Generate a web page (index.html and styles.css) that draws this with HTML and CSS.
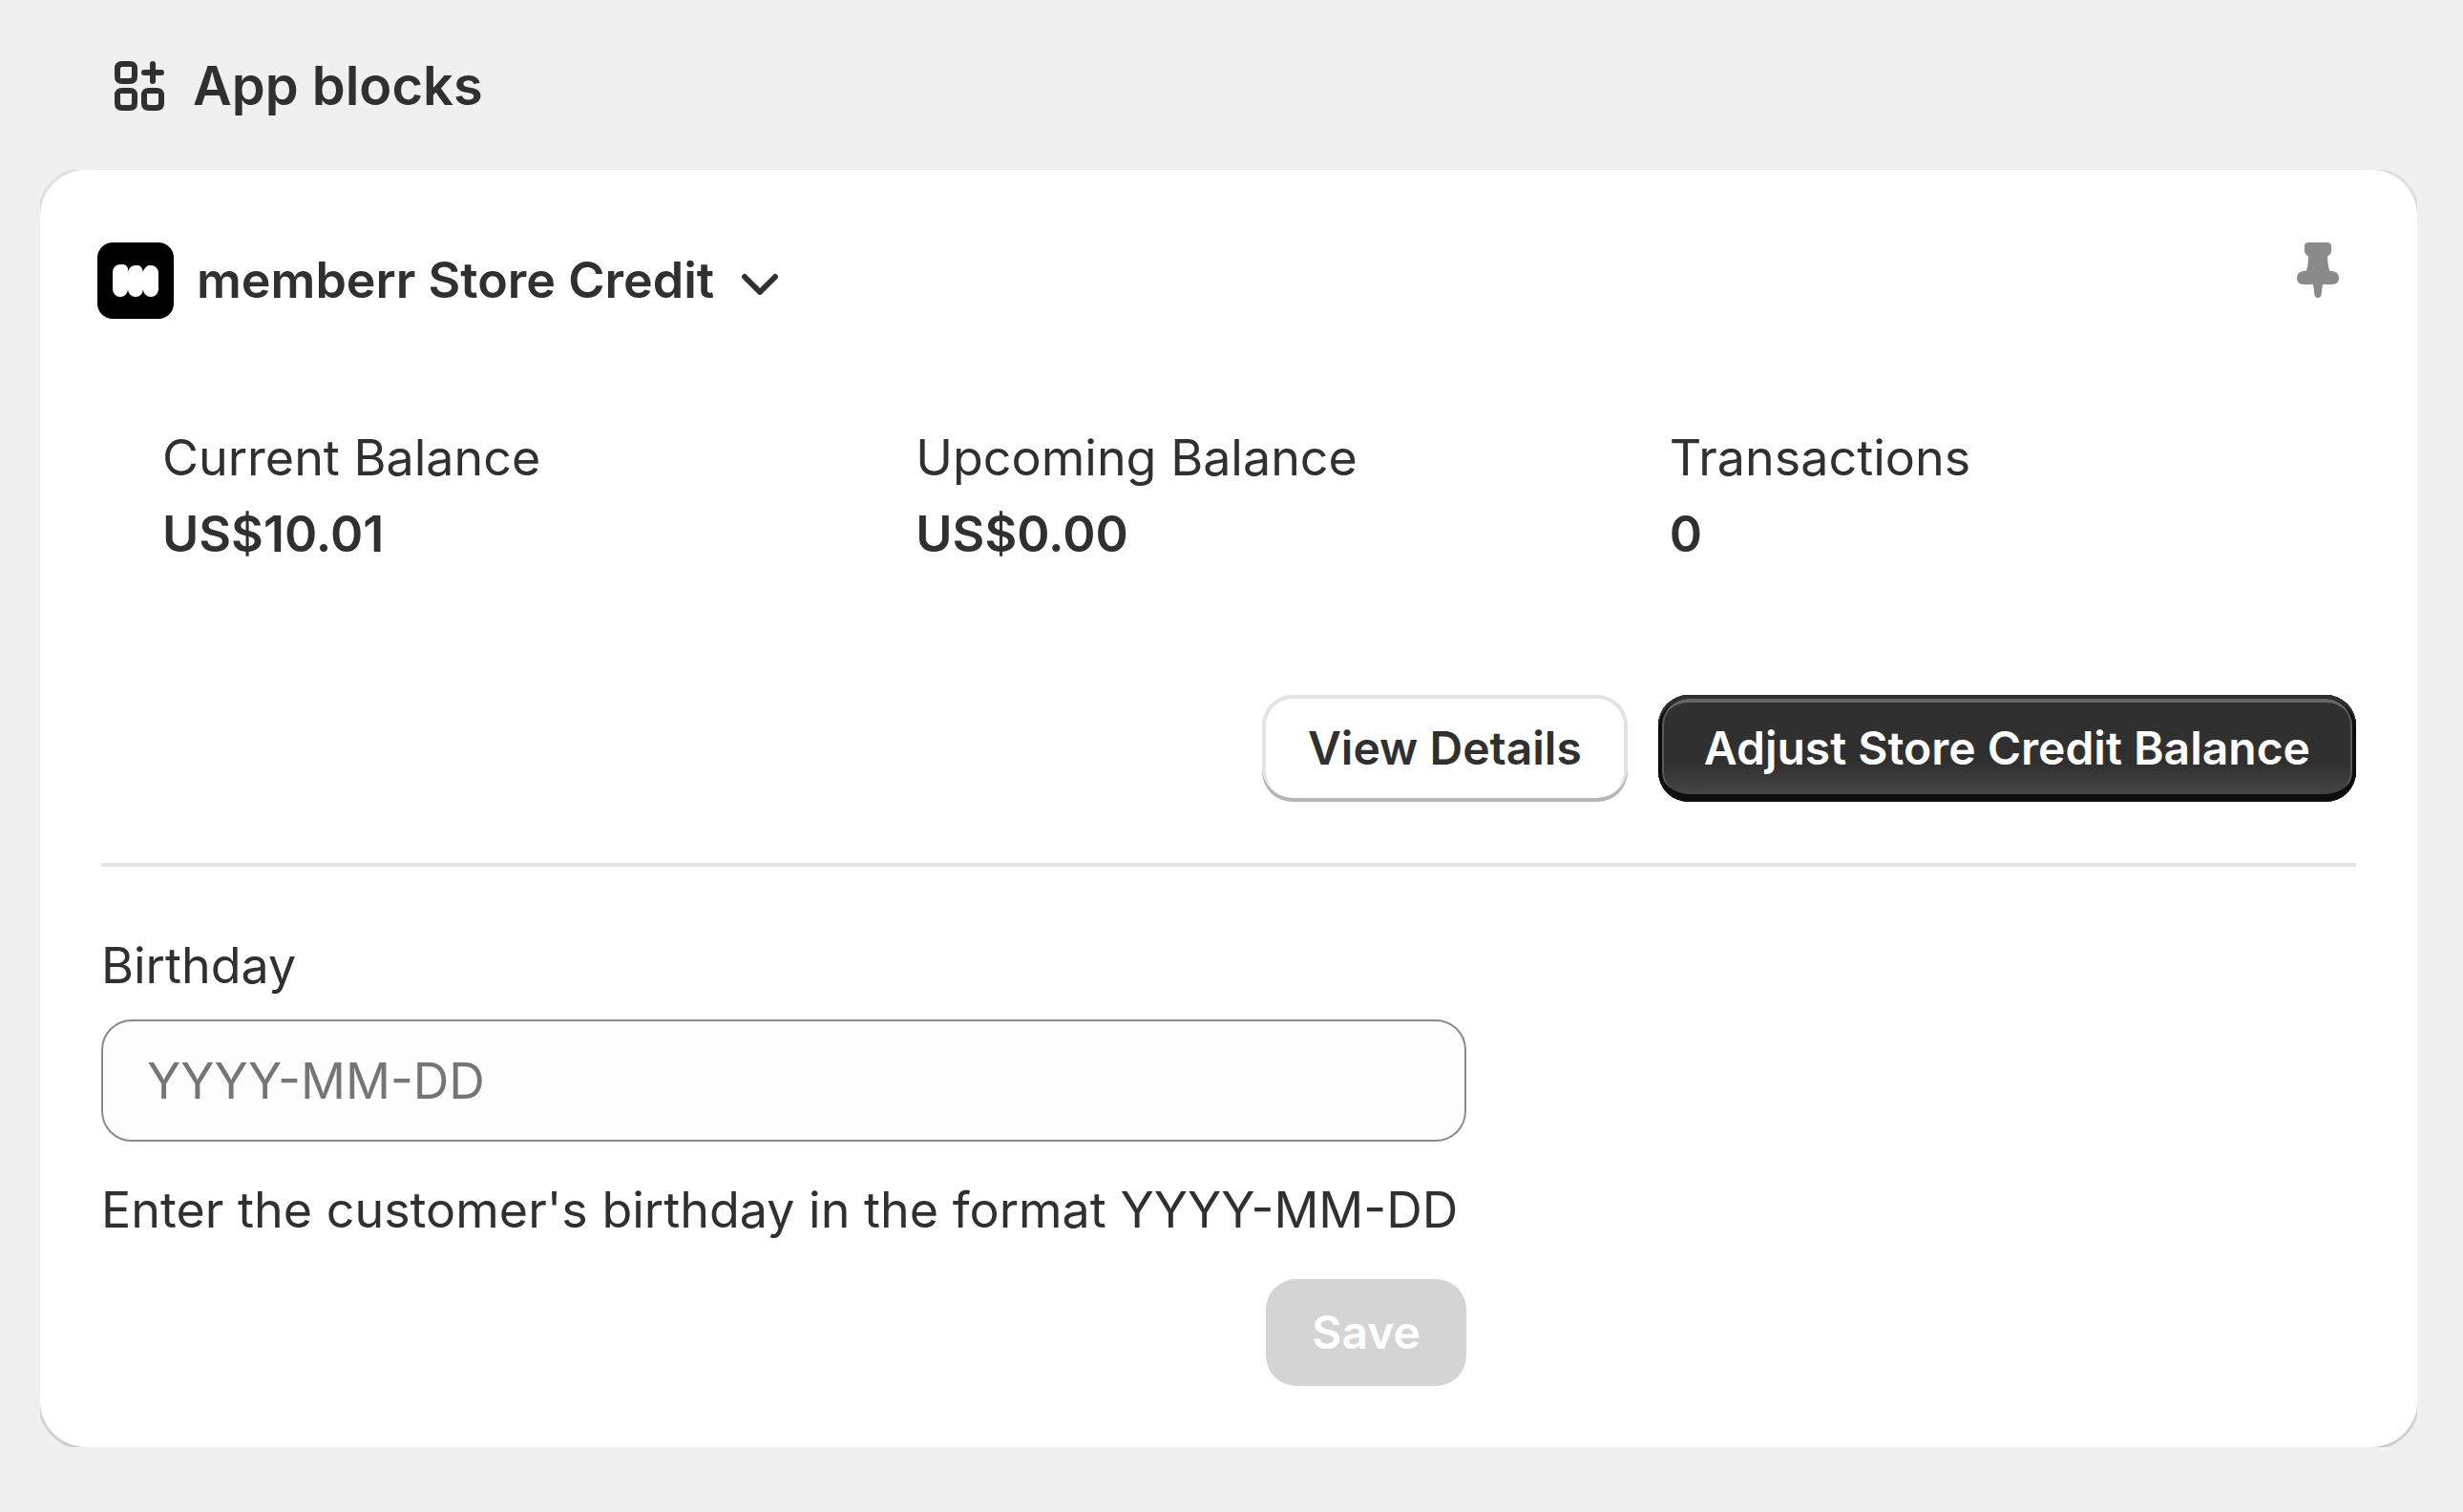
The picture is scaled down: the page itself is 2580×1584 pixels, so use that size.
FILE: index.html
```html
<!DOCTYPE html>
<html lang="en">
  <head>
    <meta charset="UTF-8" />
    <meta name="viewport" content="width=device-width, initial-scale=1.0" />
    <title>App blocks</title>
    <link rel="stylesheet" href="styles.css">
  </head>

  <body>
    <header class="page-header">
      <svg class="blocks-icon" viewBox="0 0 52 52" aria-hidden="true">
        <path fill-rule="evenodd" d="M8 0h8q8 0 8 8v8q0 8-8 8H8q-8 0-8-8V8q0-8 8-8zM8 6q-2 0-2 2v10h10q2 0 2-2V6z" />
        <path fill-rule="evenodd" d="M8 28h8q8 0 8 8v8q0 8-8 8H8q-8 0-8-8v-8q0-8 8-8zM6 34v10q0 2 2 2h8q2 0 2-2V34z" />
        <path fill-rule="evenodd" d="M36 28h8q8 0 8 8v8q0 8-8 8h-8q-8 0-8-8v-8q0-8 8-8zM34 34v10q0 2 2 2h8q2 0 2-2V34z" />
        <path class="plus" d="M40 3v18M31 12h18" />
      </svg>
      <h1>App blocks</h1>
    </header>

    <main class="card">
      <div class="card-header">
        <button type="button" class="app-switch">
          <svg class="app-logo" viewBox="0 0 80 80" aria-hidden="true">
            <rect width="80" height="80" rx="16" />
            <path class="bars" d="M24 31v18M40 32v17M56 32v17" />
            <path class="joins" d="M23 31l4-3M36 34l6-5M52 34l3-5" />
          </svg>
          <span>memberr Store Credit</span>
          <svg class="chevron" viewBox="0 0 40 24" aria-hidden="true">
            <path d="M4 4l16 16 16-16" />
          </svg>
        </button>
        <button type="button" class="pin" aria-label="Unpin">
          <svg viewBox="0 0 44 58" aria-hidden="true">
            <path d="M12 0h20q4 0 4 4v5q0 3-4 5.500l0.500 7q0.500 5 2 8.500h2.500q7 1 7 7q0 7-7 7H27l-1.500 11q-0.500 3-3.500 3t-3.500-3L17 44H7q-7 0-7-7q0-6 7-7h2.500q2-3.500 2-8.500l0.500-7q-4-2.500-4-5.500V4q0-4 4-4z" />
          </svg>
        </button>
      </div>

      <dl class="stats">
        <div>
          <dt>Current Balance</dt>
          <dd>US$10.01</dd>
        </div>
        <div>
          <dt>Upcoming Balance</dt>
          <dd>US$0.00</dd>
        </div>
        <div>
          <dt>Transactions</dt>
          <dd>0</dd>
        </div>
      </dl>

      <div class="actions">
        <button type="button" class="btn">View Details</button>
        <button type="button" class="btn primary">Adjust Store Credit Balance</button>
      </div>

      <hr />

      <form class="birthday-form">
        <label for="birthday">Birthday</label>
        <input type="text" id="birthday" placeholder="YYYY-MM-DD" aria-describedby="birthdayHelp" />
        <p id="birthdayHelp">Enter the customer's birthday in the format YYYY-MM-DD</p>
        <button type="submit" class="btn save" disabled>Save</button>
      </form>
    </main>
  </body>
</html>
```
FILE: styles.css
```css
* {
  box-sizing: border-box;
}

body {
  margin: 0;
  padding: 0 48px 68px 42px;
  background: #f0f0f0;
  color: #303030;
  font-family: Inter, sans-serif;
  font-size: 52px;
  line-height: 80px;
}

button,
input {
  font: inherit;
  color: inherit;
}

button {
  padding: 0;
  border: 0;
  background: none;
}

svg {
  display: block;
}

.page-header {
  display: flex;
  align-items: center;
  gap: 30px;
  padding: 50px 78px 48px;
}

.page-header h1 {
  margin: 0;
  font-size: 56px;
  font-weight: 600;
}

.blocks-icon {
  width: 52px;
  height: 52px;
  fill: #303030;
}

.blocks-icon .plus {
  fill: none;
  stroke: #303030;
  stroke-width: 6;
  stroke-linecap: round;
}

.card {
  padding: 76px 64px 64px;
  background: #fff;
  border-radius: 48px;
  /* only the corners of the shadow stay visible */
  box-shadow: 0 0 0 3px rgba(0, 0, 0, 0.07), 0 3px 3px rgba(0, 0, 0, 0.1);
  clip-path: inset(0);
}

.card-header {
  display: flex;
  align-items: flex-start;
  justify-content: space-between;
  padding-right: 18px;
  margin-left: -4px;
}

.app-switch {
  display: flex;
  align-items: center;
  gap: 24px;
  font-weight: 600;
}

.app-logo {
  width: 80px;
  height: 80px;
}

.app-logo path {
  fill: none;
  stroke: #fff;
  stroke-linecap: round;
}

.app-logo .bars {
  stroke-width: 16;
}

.app-logo .joins {
  stroke-width: 10;
}

.chevron {
  width: 40px;
  height: 24px;
  margin: 8px 0 0 4px;
  fill: none;
  stroke: #303030;
  stroke-width: 6;
  stroke-linecap: round;
  stroke-linejoin: round;
}

.pin svg {
  width: 44px;
  height: 58px;
  fill: #8a8a8a;
}

.stats {
  display: grid;
  grid-template-columns: repeat(3, 1fr);
  gap: 70px;
  margin: 106px 0 128px;
  padding-left: 64px;
}

.stats dd {
  margin: 0;
  font-weight: 600;
}

.actions {
  display: flex;
  justify-content: flex-end;
  gap: 32px;
}

.btn {
  height: 112px;
  padding: 0 48px;
  border-radius: 32px;
  background: #fff;
  font-size: 48px;
  font-weight: 600;
  box-shadow: 0 -4px 0 #b5b5b5 inset, 0 0 0 4px #e3e3e3 inset;
}

.btn.primary {
  background: linear-gradient(#303030 64%, #4a4a4a);
  color: #fff;
  box-shadow: 0 4px 0 #303030 inset, 0 -8px 0 #0d0d0d inset,
    0 0 0 4px #0d0d0d inset, 0 8px 0 #666 inset, 0 0 0 6px #5a5a5a inset;
}

.btn.save {
  justify-self: end;
  background: #d4d4d4;
  color: #fff;
  box-shadow: none;
}

hr {
  height: 4px;
  margin: 64px 0;
  border: 0;
  background: #e3e3e3;
}

.birthday-form {
  display: grid;
  width: 1430px;
  max-width: 100%;
}

.birthday-form input {
  width: 100%;
  height: 128px;
  margin: 16px 0 32px;
  padding: 0 46px;
  border: 2px solid #8a8a8a;
  border-radius: 32px;
  background: #fdfdfd;
}

.birthday-form input::placeholder {
  color: #757575;
}

.birthday-form p {
  margin: 0 0 32px;
}
```
